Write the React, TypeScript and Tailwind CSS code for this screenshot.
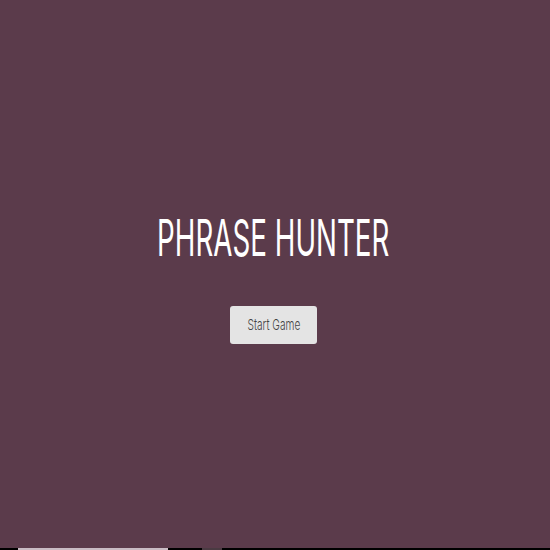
export default function App() {
  return (
    <div className="flex h-[550px] w-[550px] flex-col bg-[#5b3b4b]" style={{ fontFamily: "Inter, 'Noto Sans', sans-serif" }}>
      <main className="flex flex-1 flex-col items-center pt-[214px] pr-[3px]">
        <h1 className="scale-x-[0.555] text-[50px] leading-[48px] font-normal whitespace-nowrap text-white">PHRASE HUNTER</h1>
        <button className="mt-[44px] flex h-[38px] w-[87px] items-center justify-center rounded-[3px] bg-[#e4e4e4]">
          <span className="scale-x-[0.68] text-[15px] font-light whitespace-nowrap text-[#444]">Start Game</span>
        </button>
      </main>
      {/* bottom strip */}
      <div className="flex h-[2px] bg-black">
        <div className="ml-[18px] w-[150px] bg-[#c9bcc4]" />
        <div className="ml-[34px] w-[20px] bg-[#4a3a42]" />
      </div>
    </div>
  );
}
